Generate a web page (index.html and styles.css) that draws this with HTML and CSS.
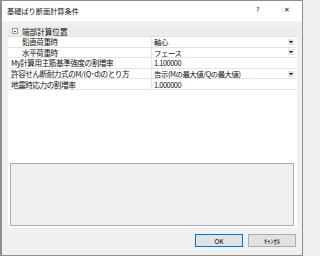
FILE: index.html
```html
<!DOCTYPE html>
<html lang="ja">
<head>
<meta charset="utf-8">
<link rel="stylesheet" href="styles.css">
</head>
<body>
<div class="window">
  <div class="titlebar">
    <span class="title">基礎ばり断面計算条件</span>
    <span class="help">?</span>
    <span class="close">✕</span>
  </div>
  <div class="content">
    <div class="panel">
      <div class="grid">
        <div class="row category">
          <span class="toggle"><span class="minus"></span></span>
          <span class="cat-label">端部計算位置</span>
        </div>
        <div class="row">
          <div class="label sub">鉛直荷重時</div>
          <div class="value"><span class="val-text">軸心</span><span class="drop"></span></div>
        </div>
        <div class="row">
          <div class="label sub">水平荷重時</div>
          <div class="value"><span class="val-text">フェース</span><span class="drop"></span></div>
        </div>
        <div class="row">
          <div class="label">My計算用主筋基準強度の割増率</div>
          <div class="value"><span class="val-text">1.100000</span></div>
        </div>
        <div class="row">
          <div class="label">許容せん断耐力式のM/(Q･d)のとり方</div>
          <div class="value"><span class="val-text">告示(Mの最大値/Qの最大値)</span><span class="drop"></span></div>
        </div>
        <div class="row">
          <div class="label">地震時応力の割増率</div>
          <div class="value"><span class="val-text">1.000000</span></div>
        </div>
      </div>
      <div class="desc"></div>
    </div>
  </div>
  <div class="footer">
    <button class="btn primary">OK</button>
    <button class="btn">ｷｬﾝｾﾙ</button>
  </div>
</div>
</body>
</html>
```

FILE: styles.css
```css
html, body {
  margin: 0;
  padding: 0;
  width: 303px;
  height: 256px;
  overflow: hidden;
  background: #f0f0f0;
}

.window {
  box-sizing: border-box;
  width: 303px;
  height: 256px;
  border: 1px solid #8e8e8e;
  border-left-width: 2px;
  background: #f0f0f0;
  display: flex;
  flex-direction: column;
  font-family: "Noto Sans CJK JP", "Noto Sans", sans-serif;
  color: #000;
}

.titlebar {
  height: 20px;
  background: #fff;
  display: flex;
  align-items: center;
  padding-left: 5px;
  flex-shrink: 0;
}

.title {
  font-size: 7.2px;
  line-height: 10px;
  flex: 1;
  margin-top: -1px;
  color: #111;
}

.help {
  font-family: "DejaVu Sans", sans-serif;
  font-size: 7px;
  width: 8px;
  margin-right: 20px;
  margin-top: -2px;
  color: #222;
}

.close {
  font-family: "DejaVu Sans", sans-serif;
  font-size: 7px;
  width: 8px;
  margin-right: 10px;
  margin-top: -2px;
  color: #222;
}

.content {
  padding: 5px 5px 0 6px;
  flex-shrink: 0;
}

.panel {
  background: #fff;
  height: 202px;
  box-sizing: border-box;
  display: flex;
  flex-direction: column;
  justify-content: space-between;
  padding: 0 3px 2px 2px;
}

.grid {
  margin: 0 -3px 0 -2px;
}

.row {
  display: flex;
  height: 10.6px;
  box-sizing: border-box;
  border-bottom: 1px solid #e4e4e4;
  font-size: 7.6px;
  line-height: 9px;
  white-space: nowrap;
  color: #111;
}

.row.category {
  height: 11px;
  background: #ececec;
  align-items: center;
  border-bottom: 1px solid #e0e0e0;
}

.toggle {
  box-sizing: border-box;
  width: 6px;
  height: 6px;
  border: 1px solid #9a9a9a;
  background: #fff;
  margin-left: 4px;
  margin-right: 4px;
  display: flex;
  align-items: center;
  justify-content: center;
}

.minus {
  width: 2px;
  height: 1px;
  background: #555;
}

.cat-label {
  font-size: 7.6px;
  line-height: 9px;
}

.label {
  box-sizing: border-box;
  width: 144px;
  padding-left: 3px;
  border-right: 1px solid #e4e4e4;
  overflow: hidden;
  display: flex;
  align-items: center;
  letter-spacing: -0.45px;
}

.label.sub {
  padding-left: 14px;
}

.value {
  flex: 1;
  display: flex;
  align-items: center;
  padding-left: 2px;
  padding-right: 3px;
}

.val-text {
  flex: 1;
  font-size: 7.4px;
  letter-spacing: -0.45px;
}

.drop {
  width: 6px;
  height: 6px;
  background: #e3e3e3;
  display: flex;
  align-items: center;
  justify-content: center;
}

.drop::after {
  content: "";
  width: 0;
  height: 0;
  border-left: 2px solid transparent;
  border-right: 2px solid transparent;
  border-top: 2px solid #000;
}

.desc {
  height: 63px;
  box-sizing: border-box;
  background: #f0f0f0;
  border: 1px solid #ababab;
}

.footer {
  display: flex;
  justify-content: flex-end;
  gap: 5px;
  padding: 6px 6px 0 0;
}

.btn {
  box-sizing: border-box;
  width: 48px;
  height: 13px;
  padding: 0;
  margin: 0;
  background: #e1e1e1;
  border: 1px solid #adadad;
  font-family: "Noto Sans CJK JP", "Noto Sans", sans-serif;
  font-size: 6.5px;
  line-height: 10px;
  color: #000;
}

.btn.primary {
  border-color: #0078d7;
}
```
